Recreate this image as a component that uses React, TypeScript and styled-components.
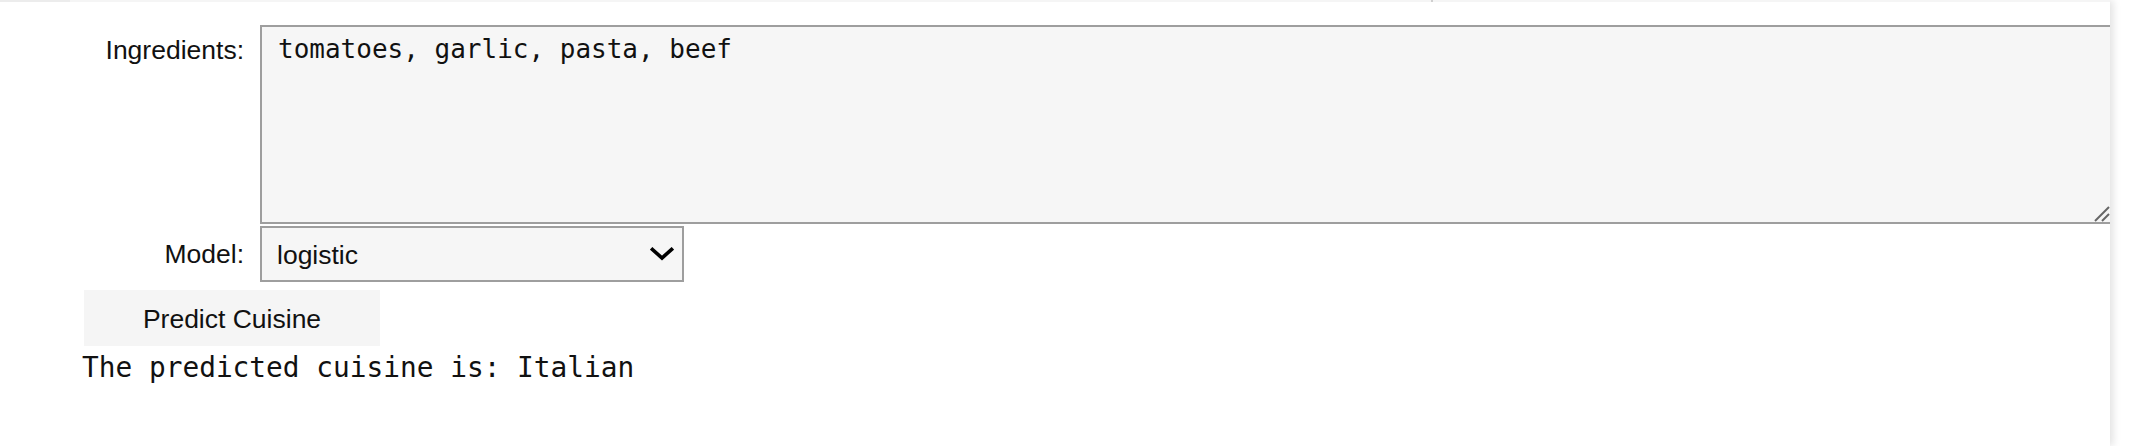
import React from "react";
import styled, { createGlobalStyle } from "styled-components";

const Global = createGlobalStyle`
  html, body { margin: 0; padding: 0; background: #ffffff; }
  body { width: 2140px; height: 446px; overflow: hidden; }
`;

const Page = styled.div`
  display: flex;
  width: 2140px;
  height: 446px;
  background: #ffffff;
`;

const Panel = styled.div`
  width: 2110px;
  height: 446px;
  overflow: hidden;
  display: flex;
  flex-direction: column;
  background: #ffffff;
  box-shadow: 3px 0 8px rgba(0, 0, 0, 0.12);
  position: relative;
`;

const TopStrip = styled.div`
  display: flex;
  height: 2px;
  flex: none;
`;

const StripPart = styled.div<{ $w?: number; $c: string }>`
  height: 2px;
  background: ${(p) => p.$c};
  ${(p) => (p.$w ? `width: ${p.$w}px; flex: none;` : "flex: 1;")}
`;

const Content = styled.div`
  display: flex;
  flex-direction: column;
  padding-left: 84px;
`;

const Row = styled.div<{ $top: number }>`
  display: flex;
  align-items: flex-start;
  margin-top: ${(p) => p.$top}px;
`;

const Label = styled.label<{ $h: number }>`
  flex: none;
  width: 160px;
  margin-right: 16px;
  height: ${(p) => p.$h}px;
  line-height: ${(p) => p.$h}px;
  text-align: right;
  font-family: "Liberation Sans", Arial, sans-serif;
  font-size: 26.5px;
  color: #111111;
  white-space: nowrap;
`;

const AreaWrap = styled.div`
  position: relative;
  width: 1850px;
  height: 199px;
`;

const TextArea = styled.textarea`
  box-sizing: border-box;
  width: 1850px;
  height: 199px;
  margin: 0;
  padding: 7px 16px 6px;
  border: 2px solid #9e9e9e;
  border-right-width: 0;
  border-radius: 0;
  background: #f6f6f6;
  font-family: "DejaVu Sans Mono", monospace;
  font-size: 26px;
  line-height: 1.2;
  color: #111111;
  outline: none;
  resize: none;
`;

const Grip = styled.svg`
  position: absolute;
  right: 0;
  bottom: 2px;
  width: 16px;
  height: 16px;
  pointer-events: none;
`;

const SelectWrap = styled.div`
  position: relative;
  width: 424px;
  height: 56px;
`;

const Select = styled.select`
  box-sizing: border-box;
  width: 424px;
  height: 56px;
  margin: 0;
  padding: 2px 50px 0 15px;
  border: 2px solid #9e9e9e;
  border-radius: 0;
  background: #f6f6f6;
  font-family: "Liberation Sans", Arial, sans-serif;
  font-size: 26.5px;
  color: #111111;
  appearance: none;
  -webkit-appearance: none;
  outline: none;
`;

const Chevron = styled.svg`
  position: absolute;
  right: 10px;
  top: 21px;
  width: 24px;
  height: 14px;
  pointer-events: none;
`;

const Button = styled.button`
  margin-top: 8px;
  width: 296px;
  height: 56px;
  border: none;
  border-radius: 0;
  background: #f5f5f5;
  font-family: "Liberation Sans", Arial, sans-serif;
  font-size: 26.5px;
  color: #111111;
  padding: 2px 0 0;
  cursor: pointer;
`;

const Output = styled.pre`
  margin: 5px 0 0 -2px;
  font-family: "DejaVu Sans Mono", monospace;
  font-size: 27.8px;
  line-height: 1.2;
  color: #111111;
`;

export default function App() {
  return (
    <>
      <Global />
      <Page>
        <Panel>
          <TopStrip>
            <StripPart $w={70} $c="#ececec" />
            <StripPart $w={1361} $c="#f5f5f5" />
            <StripPart $w={2} $c="#cfcfcf" />
            <StripPart $c="#f5f5f5" />
          </TopStrip>
          <Content>
            <Row $top={23}>
              <Label $h={50}>Ingredients:</Label>
              <AreaWrap>
                <TextArea defaultValue="tomatoes, garlic, pasta, beef" />
                <Grip viewBox="0 0 16 16">
                  <path d="M1 15 L15 1" stroke="#666" strokeWidth="2" />
                  <path d="M8 15 L15 8" stroke="#666" strokeWidth="2" />
                </Grip>
              </AreaWrap>
            </Row>
            <Row $top={2}>
              <Label $h={56}>Model:</Label>
              <SelectWrap>
                <Select defaultValue="logistic">
                  <option value="logistic">logistic</option>
                  <option value="svm">svm</option>
                  <option value="random_forest">random_forest</option>
                </Select>
                <Chevron viewBox="0 0 24 14">
                  <path d="M2.5 2.5 L12 11 L21.5 2.5" fill="none" stroke="#000" strokeWidth="3.6" strokeLinecap="square" />
                </Chevron>
              </SelectWrap>
            </Row>
            <div>
              <Button>Predict Cuisine</Button>
            </div>
            <Output>The predicted cuisine is: Italian</Output>
          </Content>
        </Panel>
      </Page>
    </>
  );
}
